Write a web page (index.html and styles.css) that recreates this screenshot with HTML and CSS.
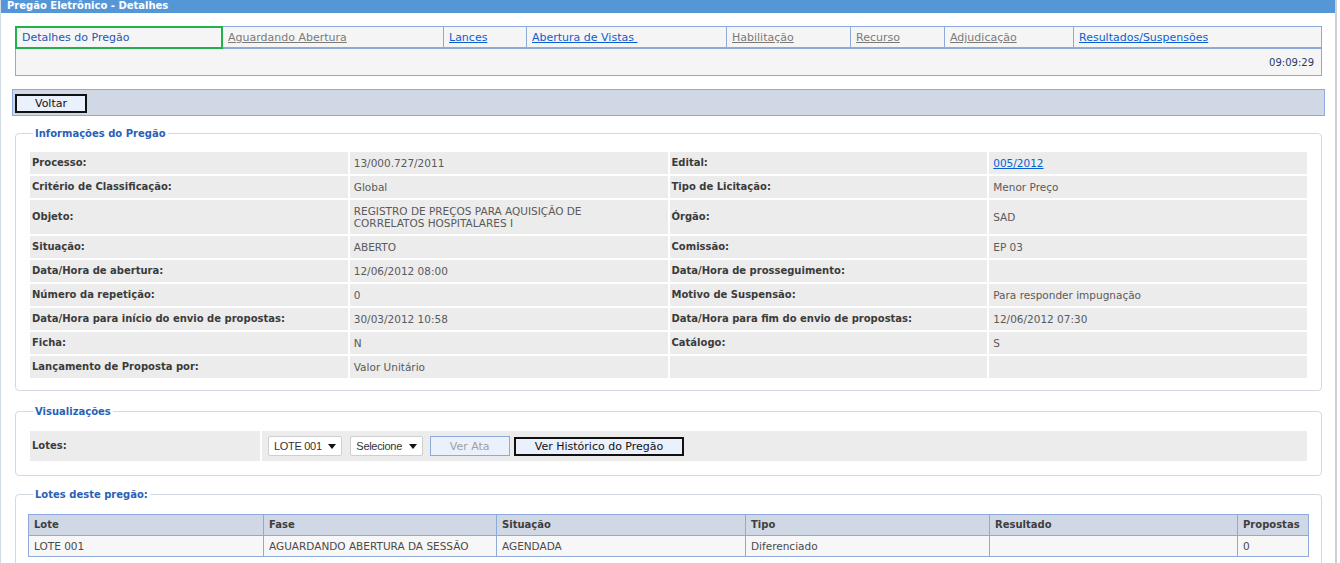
FILE: index.html
```html
<!DOCTYPE html>
<html lang="pt-BR">
<head>
<meta charset="utf-8">
<title>Pregão Eletrônico - Detalhes</title>
<link rel="stylesheet" href="styles.css">
</head>
<body>
<div class="page">
  <div class="titlebar">Pregão Eletrônico - Detalhes</div>

  <div class="tabbox">
    <div class="tabs">
      <div class="tab active">Detalhes do Pregão</div>
      <div class="tab"><a class="off" href="#">Aguardando Abertura</a></div>
      <div class="tab"><a class="on" href="#">Lances</a></div>
      <div class="tab"><a class="on" href="#">Abertura de Vistas&nbsp;</a></div>
      <div class="tab"><a class="off" href="#">Habilitação</a></div>
      <div class="tab"><a class="off" href="#">Recurso</a></div>
      <div class="tab"><a class="off" href="#">Adjudicação</a></div>
      <div class="tab last"><a class="on" href="#">Resultados/Suspensões</a></div>
    </div>
    <div class="clock">09:09:29</div>
  </div>

  <div class="actionbar">
    <button class="btn strong voltar" type="button">Voltar</button>
  </div>

  <fieldset class="box info">
    <legend>Informações do Pregão</legend>
    <table class="grid">
      <colgroup><col class="c1"><col class="c2"><col class="c3"><col class="c4"></colgroup>
      <tr><th>Processo:</th><td>13/000.727/2011</td><th>Edital:</th><td><a class="on" href="#">005/2012</a></td></tr>
      <tr><th>Critério de Classificação:</th><td>Global</td><th>Tipo de Licitação:</th><td>Menor Preço</td></tr>
      <tr class="tall"><th>Objeto:</th><td>REGISTRO DE PREÇOS PARA AQUISIÇÃO DE<br>CORRELATOS HOSPITALARES I</td><th>Órgão:</th><td>SAD</td></tr>
      <tr><th>Situação:</th><td>ABERTO</td><th>Comissão:</th><td>EP 03</td></tr>
      <tr><th>Data/Hora de abertura:</th><td>12/06/2012 08:00</td><th>Data/Hora de prosseguimento:</th><td></td></tr>
      <tr><th>Número da repetição:</th><td>0</td><th>Motivo de Suspensão:</th><td>Para responder impugnação</td></tr>
      <tr><th>Data/Hora para início do envio de propostas:</th><td>30/03/2012 10:58</td><th>Data/Hora para fim do envio de propostas:</th><td>12/06/2012 07:30</td></tr>
      <tr><th>Ficha:</th><td>N</td><th>Catálogo:</th><td>S</td></tr>
      <tr><th>Lançamento de Proposta por:</th><td>Valor Unitário</td><th></th><td></td></tr>
    </table>
  </fieldset>

  <fieldset class="box views">
    <legend>Visualizações</legend>
    <table class="grid">
      <tr>
        <th class="lotes-label">Lotes:</th>
        <td class="controls">
          <span class="sel w1"><select><option>LOTE 001</option></select></span>
          <span class="sel w2"><select><option>Selecione</option></select></span>
          <button class="btn disabled ata" type="button">Ver Ata</button>
          <button class="btn strong hist" type="button">Ver Histórico do Pregão</button>
        </td>
      </tr>
    </table>
  </fieldset>

  <fieldset class="box lots">
    <legend>Lotes deste pregão:</legend>
    <table class="list">
      <colgroup><col class="l1"><col class="l2"><col class="l3"><col class="l4"><col class="l5"><col class="l6"></colgroup>
      <tr class="head"><th>Lote</th><th>Fase</th><th>Situação</th><th>Tipo</th><th>Resultado</th><th>Propostas</th></tr>
      <tr><td>LOTE 001</td><td>AGUARDANDO ABERTURA DA SESSÃO</td><td>AGENDADA</td><td>Diferenciado</td><td></td><td>0</td></tr>
    </table>
  </fieldset>
</div>
</body>
</html>
```

FILE: styles.css
```css
* { box-sizing: border-box; }

html, body {
  margin: 0;
  padding: 0;
  background: #ffffff;
}

body {
  font-family: "DejaVu Sans", Verdana, sans-serif;
  font-size: 10px;
  color: #444;
}

.page {
  width: 1337px;
  min-height: 563px;
  border-left: 1px solid #d4dbe8;
  border-right: 2px solid #cfcfcf;
}

.titlebar {
  height: 13px;
  line-height: 12px;
  background: #5597d6;
  color: #fff;
  font-weight: bold;
  padding-left: 6px;
}

/* ---------- tabs ---------- */
.tabbox {
  margin: 13px 13px 0 14px;
  border: 1px solid #8eaadb;
  background: #f5f5f5;
}

.tabs {
  display: grid;
  grid-template-columns: 207px 221px 83px 200px 124px 94px 129px 1fr;
  height: 22px;
  border-bottom: 2px solid #8eaadb;
  font-size: 11px;
}

.tab {
  border-right: 1px solid #8eaadb;
  padding-left: 5px;
  line-height: 21px;
  white-space: nowrap;
}

.tab.last { border-right: 0; }

.tab.active {
  margin: -1px 0 -1px -1px;
  border: 2px solid #22b14c;
  color: #2356b8;
  padding-left: 5px;
  line-height: 19px;
  position: relative;
}

a.on { color: #0b5ed0; text-decoration: underline; }
a.off { color: #7a7a7a; text-decoration: underline; }

.clock {
  height: 26px;
  padding-top: 2px;
  line-height: 24px;
  text-align: right;
  padding-right: 7px;
  color: #1e3c6e;
}

/* ---------- action bar ---------- */
.actionbar {
  margin: 13px 10px 0 11px;
  height: 27px;
  background: #d0d8e6;
  border: 1px solid #8eaadb;
  padding: 4px 0 0 2px;
}

.btn {
  font-family: "DejaVu Sans", Verdana, sans-serif;
  font-size: 11px;
  background: #eaf0fc;
  padding: 0;
  margin: 0;
  color: #111;
}

.btn.strong {
  border: 2px solid #111;
}

.voltar {
  width: 72px;
  height: 19px;
}

/* ---------- fieldsets ---------- */
.box {
  margin: 0 13px 0 14px;
  border: 1px solid #d3d9e1;
  border-radius: 4px;
  padding: 10px 12px 10px 12px;
  min-width: 0;
}

.box legend {
  color: #2a5fb8;
  font-weight: bold;
  padding: 0 2px;
  margin-left: 5px;
  line-height: 13px;
}

.info { margin-top: 11px; }
.views { margin-top: 14px; padding-top: 11px; padding-bottom: 12px; }
.lots { margin-top: 12px; padding-top: 13px; }

/* info grid */
.grid {
  width: 100%;
  border-collapse: separate;
  border-spacing: 2px;
}

.grid col.c1,
.grid col.c2,
.grid col.c3,
.grid col.c4 { width: 25%; }

.grid th,
.grid td {
  background: #ececec;
  height: 22px;
  padding: 0 4px;
  text-align: left;
  vertical-align: middle;
  line-height: 12px;
}

.grid th {
  color: #3b3b3b;
  font-weight: bold;
  padding-left: 2px;
}

.grid td {
  color: #5a5a5a;
  font-size: 10.5px;
}

.grid tr.tall th,
.grid tr.tall td { height: 34px; }

/* views row */
.lotes-label {
  width: 230px;
  height: 30px !important;
}

.controls {
  padding-left: 6px !important;
  white-space: nowrap;
}

.sel {
  display: inline-block;
  position: relative;
  vertical-align: middle;
  height: 20px;
  background: #fff;
  border: 1px solid #cfcfcf;
  border-radius: 2px;
}

.sel select {
  appearance: none;
  -webkit-appearance: none;
  border: 0;
  background: transparent;
  font-family: "Liberation Sans", Arial, sans-serif;
  font-size: 11px;
  color: #333;
  height: 18px;
  padding: 0 0 0 5px;
  width: 100%;
  letter-spacing: -0.3px;
}

.sel::after {
  content: "";
  position: absolute;
  right: 5px;
  top: 7px;
  border-left: 4px solid transparent;
  border-right: 4px solid transparent;
  border-top: 5px solid #111;
}

.sel.w1 { width: 74px; margin-right: 5px; }
.sel.w2 { width: 73px; margin-right: 3px; }

.ata {
  width: 80px;
  height: 20px;
  border: 1px solid #8eaadb;
  color: #a0a0a0;
  vertical-align: middle;
  margin-right: 1px;
}

.hist {
  width: 170px;
  height: 19px;
  vertical-align: middle;
}

/* lots list */
.list {
  width: 100%;
  border-collapse: collapse;
}

.list col.l1 { width: 235px; }
.list col.l2 { width: 233px; }
.list col.l3 { width: 249px; }
.list col.l4 { width: 244px; }
.list col.l5 { width: 248px; }

.list th,
.list td {
  border: 1px solid #8eaadb;
  text-align: left;
  padding: 0 5px;
  height: 21px;
  line-height: 12px;
}

.list th {
  background: #d0d8e6;
  color: #3e3e3e;
  font-weight: bold;
}

.list td {
  background: #f7f7f7;
  color: #4a4a4a;
  font-size: 10.5px;
}
```
